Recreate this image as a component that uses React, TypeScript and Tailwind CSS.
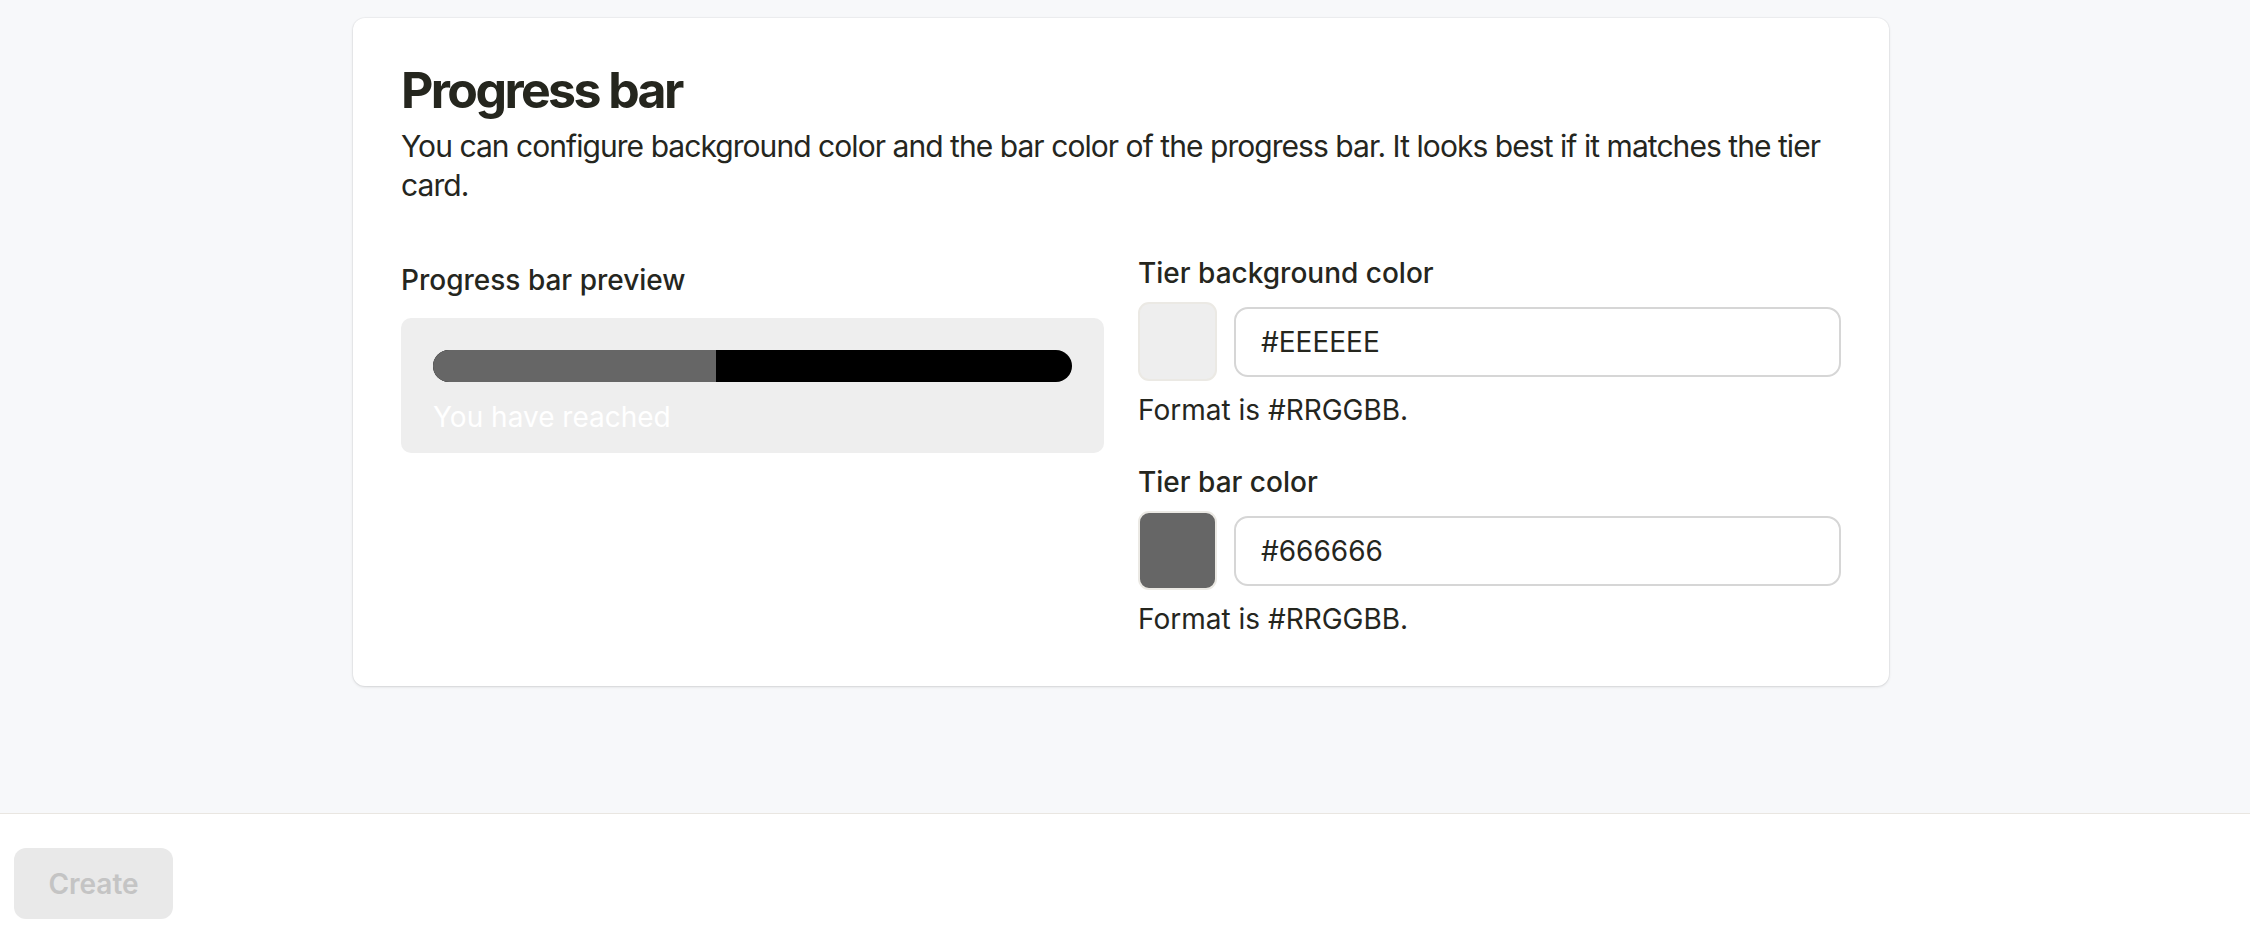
import React from "react";

function ColorField({ label, value, swatch }: { label: string; value: string; swatch: string }) {
  return (
    <div className="flex flex-col">
      <div className="text-[28px] leading-[40px] font-medium text-[#25261e]">{label}</div>
      <div className="mt-[9px] flex items-center gap-[17px]">
        <div
          className="h-[79px] w-[79px] shrink-0 rounded-[11px] border-2 border-[#ebe9e4]"
          style={{ backgroundColor: swatch }}
        />
        <div className="flex h-[70px] flex-1 items-center rounded-[14px] border-2 border-[#d6d6d6] bg-white pl-[25px] text-[28px] text-[#25261e]">
          {value}
        </div>
      </div>
      <div className="mt-[9px] text-[28px] leading-[40px] text-[#25261e]">Format is #RRGGBB.</div>
    </div>
  );
}

export default function App() {
  return (
    <div className="flex h-[940px] w-[2250px] flex-col overflow-hidden font-['Inter',sans-serif]">
      <main className="h-[813px] shrink-0 bg-[#f7f8fa] pl-[353px] pt-[18px]">
        <section className="w-[1536px] rounded-[12px] bg-white px-[48px] pb-[47px] pt-[42px] shadow-[0_0_0_1px_rgba(0,0,0,0.03),0_1px_3px_rgba(0,0,0,0.12)]">
          <h1 className="text-[50px] leading-[60px] font-bold tracking-[-2.6px] text-[#25261e]">Progress bar</h1>
          <p className="mt-[7px] text-[30px] leading-[39px] tracking-[-0.95px] text-[#25261e]">
            You can configure background color and the bar color of the progress bar. It looks best if it matches the tier card.
          </p>
          <div className="mt-[48px] grid grid-cols-[703px_1fr] gap-[34px]">
            <div className="flex flex-col pt-[7px]">
              <div className="text-[28px] leading-[40px] font-medium text-[#25261e]">Progress bar preview</div>
              <div className="mt-[18px] rounded-[10px] bg-[#eeeeee] px-[32px] pb-[16px] pt-[32px]">
                <div className="flex h-[32px] overflow-hidden rounded-full bg-black">
                  <div className="h-full w-[283px] bg-[#666666]" />
                </div>
                <div className="mt-[15px] text-[28px] leading-[40px] text-white">You have reached</div>
              </div>
            </div>
            <div className="flex flex-col gap-[32px]">
              <ColorField label="Tier background color" value="#EEEEEE" swatch="#eeeeee" />
              <ColorField label="Tier bar color" value="#666666" swatch="#666666" />
            </div>
          </div>
        </section>
      </main>
      <footer className="flex-1 border-t border-[#e9e6e1] bg-white pl-[14px] pt-[34px]">
        <button className="h-[71px] w-[159px] rounded-[12px] bg-[#e9e9e9] text-[28px] font-semibold text-[#c4c4c4]">
          Create
        </button>
      </footer>
    </div>
  );
}
